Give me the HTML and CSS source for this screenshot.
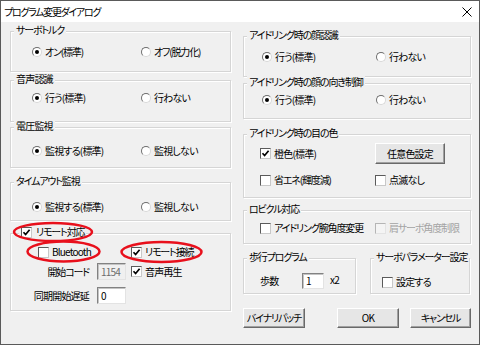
FILE: index.html
```html
<!DOCTYPE html>
<html lang="ja">
<head>
<meta charset="utf-8">
<title>プログラム変更ダイアログ</title>
<link rel="stylesheet" href="styles.css">
</head>
<body>
<div class="window">
  <div class="titlebar">
    <span class="title">プログラム変更ダイアログ</span>
    <svg class="close" width="10" height="10" viewBox="0 0 10 10"><path d="M0.5 0.5 L9.5 9.5 M9.5 0.5 L0.5 9.5" stroke="#000" stroke-width="1" fill="none"/></svg>
  </div>
  <div class="client">
    <div class="col col-left">
      <div class="group g-torque">
        <div class="gtitle kana">サーボトルク</div>
        <div class="row radios-l">
          <span class="opt kana"><i class="radio on"></i>オン(標準)</span>
          <span class="opt kana"><i class="radio"></i>オフ(脱力化)</span>
        </div>
      </div>
      <div class="group g-voice">
        <div class="gtitle">音声認識</div>
        <div class="row radios-l">
          <span class="opt"><i class="radio on"></i>行う(標準)</span>
          <span class="opt"><i class="radio"></i>行わない</span>
        </div>
      </div>
      <div class="group g-volt">
        <div class="gtitle">電圧監視</div>
        <div class="row radios-l">
          <span class="opt"><i class="radio on"></i>監視する(標準)</span>
          <span class="opt"><i class="radio"></i>監視しない</span>
        </div>
      </div>
      <div class="group g-timeout">
        <div class="gtitle kana">タイムアウト監視</div>
        <div class="row radios-l">
          <span class="opt"><i class="radio on"></i>監視する(標準)</span>
          <span class="opt"><i class="radio"></i>監視しない</span>
        </div>
      </div>
      <div class="group g-remote">
        <div class="gtitle gtitle-check kana"><i class="check on"><svg viewBox="0 0 9 9"><path d="M1.5 4.2 L3.6 6.5 L7.6 1.8" /></svg></i>リモート対応</div>
        <div class="row remote-row1">
          <span class="opt opt-bt"><i class="check"></i>Bluetooth</span>
          <span class="opt kana"><i class="check on"><svg viewBox="0 0 9 9"><path d="M1.5 4.2 L3.6 6.5 L7.6 1.8" /></svg></i>リモート接続</span>
        </div>
        <div class="row field-row field-row2">
          <span class="flabel kana">開始コード</span>
          <span class="input disabled">1154</span>
          <span class="opt opt-sound"><i class="check on"><svg viewBox="0 0 9 9"><path d="M1.5 4.2 L3.6 6.5 L7.6 1.8" /></svg></i>音声再生</span>
        </div>
        <div class="row field-row field-row3">
          <span class="flabel">同期開始遅延</span>
          <span class="input">0</span>
        </div>
      </div>
    </div>

    <div class="col col-right">
      <div class="group r-face">
        <div class="gtitle kana">アイドリング時の顔認識</div>
        <div class="row radios-r">
          <span class="opt"><i class="radio on"></i>行う(標準)</span>
          <span class="opt"><i class="radio"></i>行わない</span>
        </div>
      </div>
      <div class="group r-dir">
        <div class="gtitle kana">アイドリング時の顔の向き制御</div>
        <div class="row radios-r">
          <span class="opt"><i class="radio on"></i>行う(標準)</span>
          <span class="opt"><i class="radio"></i>行わない</span>
        </div>
      </div>
      <div class="group r-eye">
        <div class="gtitle kana">アイドリング時の目の色</div>
        <div class="row checks-r eye-row1">
          <span class="opt"><i class="check on"><svg viewBox="0 0 9 9"><path d="M1.5 4.2 L3.6 6.5 L7.6 1.8" /></svg></i>橙色(標準)</span>
          <span class="btn btn-color">任意色設定</span>
        </div>
        <div class="row checks-r eye-row2">
          <span class="opt kana"><i class="check"></i>省エネ(輝度減)</span>
          <span class="opt"><i class="check"></i>点滅なし</span>
        </div>
      </div>
      <div class="group r-robi">
        <div class="gtitle kana">ロビクル対応</div>
        <div class="row checks-r robi-row">
          <span class="opt kana"><i class="check"></i>アイドリング腕角度変更</span>
          <span class="opt kana disabled-opt"><i class="check off"></i>肩サーボ角度制限</span>
        </div>
      </div>
      <div class="pair">
        <div class="group r-walk">
          <div class="gtitle kana">歩行プログラム</div>
          <div class="row walk-row">
            <span class="wlabel">歩数</span>
            <span class="input input-steps">1</span>
            <span class="times">x2</span>
          </div>
        </div>
        <div class="group r-param">
          <div class="gtitle kana">サーボパラメーター設定</div>
          <div class="row param-row">
            <span class="opt"><i class="check"></i>設定する</span>
          </div>
        </div>
      </div>
      <div class="buttons">
        <span class="btn btn-patch kana">バイナリパッチ</span>
        <span class="btn btn-ok">OK</span>
        <span class="btn btn-cancel kana">キャンセル</span>
      </div>
    </div>
  </div>
  <svg class="marks" width="480" height="345" viewBox="0 0 480 345">
    <ellipse cx="53" cy="232" rx="39" ry="9"/>
    <ellipse cx="63.5" cy="251.5" rx="36" ry="10"/>
    <ellipse cx="161.5" cy="252" rx="40" ry="10"/>
  </svg>
</div>
</body>
</html>
```

FILE: styles.css
```css
* { box-sizing: border-box; }
html, body { margin: 0; padding: 0; }
body {
  width: 480px;
  height: 345px;
  overflow: hidden;
  background: #fff;
  font-family: "Noto Sans CJK JP", "Noto Sans", sans-serif;
  font-size: 10px;
  line-height: 12px;
  letter-spacing: -0.8px;
  color: #000;
  font-feature-settings: "palt";
}
.kana { letter-spacing: -1.15px; }
.window {
  position: relative;
  width: 480px;
  height: 345px;
  border: 1px solid #5a5a5a;
  background: #f0f0f0;
  display: flex;
  flex-direction: column;
}
.titlebar {
  height: 21px;
  flex: none;
  background: #fff;
  display: flex;
  align-items: center;
  justify-content: space-between;
  padding: 0 7px 0 3px;
}
.title { white-space: nowrap; letter-spacing: -1.3px; }
.close { display: block; }

.client {
  flex: 1;
  display: flex;
  padding: 0 8px 0 9px;
  gap: 12px;
}
.col { display: flex; flex-direction: column; }
.col-left { width: 221px; }
.col-right { width: 228px; }

.group {
  flex: none;
  border: 1px solid #d5d5d5;
  box-shadow: inset 1px 1px 0 #fff, 1px 1px 0 #fff;
  display: flex;
  flex-direction: column;
}
.gtitle {
  align-self: flex-start;
  margin: -8px 0 0 3px;
  padding: 0 2px;
  height: 12px;
  line-height: 12px;
  background: #f0f0f0;
  white-space: nowrap;
}
.gtitle-check {
  display: flex;
  align-items: center;
  gap: 4px;
  margin-left: 8px;
}

.row { display: flex; align-items: center; height: 14px; flex: none; }
.opt { display: flex; align-items: center; gap: 3px; white-space: nowrap; }

/* radios and checks */
.radio {
  position: relative;
  display: block;
  width: 10px;
  height: 10px;
  border-radius: 50%;
  border: 1px solid;
  border-color: #6e6e6e #d8d8d8 #d8d8d8 #6e6e6e;
  background: #fff;
  flex: none;
}
.radio.on::after {
  content: "";
  position: absolute;
  left: 2px;
  top: 2px;
  width: 4px;
  height: 4px;
  border-radius: 50%;
  background: #000;
}
.check {
  display: block;
  width: 11px;
  height: 11px;
  border: 1px solid;
  border-color: #5a5a5a #c8c8c8 #c8c8c8 #5a5a5a;
  background: #fff;
  flex: none;
}
.check svg { display: block; width: 9px; height: 9px; }
.check svg path { fill: none; stroke: #000; stroke-width: 1.7; }
.check.off { border-color: #b5b5b5 #e3e3e3 #e3e3e3 #b5b5b5; background: #f4f4f4; }
.disabled-opt { color: #a3a3a3; }

/* radio / check rows */
.radios-l { padding-left: 21px; }
.radios-l .opt:first-child { width: 109px; }
.radios-r { padding-left: 18px; }
.radios-r .opt:first-child { width: 114px; }
.checks-r { padding-left: 16px; }
.checks-r .opt:first-child { width: 115px; }

/* left groups */
.g-torque { margin-top: 9px; height: 41px; }
.g-torque .row { margin-top: 9px; }
.g-voice { margin-top: 8px; height: 42px; }
.g-voice .row { margin-top: 6px; }
.g-volt { margin-top: 5px; height: 41px; }
.g-volt .row { margin-top: 12px; }
.g-timeout { margin-top: 14px; height: 39px; }
.g-timeout .row { margin-top: 13px; }
.g-remote { margin-top: 12px; height: 78px; }

.remote-row1 { margin-top: 7px; padding-left: 27px; }
.opt-bt { width: 93px; }
.field-row { height: 17px; }
.field-row2 { margin-top: 4px; }
.field-row3 { margin-top: 7px; }
.flabel { width: 78px; text-align: right; margin-right: 8px; white-space: nowrap; }
.input {
  display: flex;
  align-items: center;
  width: 29px;
  height: 17px;
  padding-left: 3px;
  background: #fff;
  border: 1px solid;
  border-color: #828282 #e3e3e3 #e3e3e3 #828282;
  box-shadow: inset 1px 1px 0 #c4c4c4;
}
.input.disabled { background: #f0f0f0; color: #6d6d6d; }
.opt-sound { margin-left: 5px; }

/* right groups */
.r-face { margin-top: 14px; height: 41px; }
.r-face .row { margin-top: 9px; }
.r-dir { margin-top: 6px; height: 36px; }
.r-dir .row { margin-top: 5px; }
.r-eye { margin-top: 15px; height: 64px; }
.eye-row1 { height: 21px; margin-top: 4px; }
.eye-row2 { margin-top: 9px; }
.r-robi { margin-top: 12px; height: 34px; }
.robi-row { margin-top: 6px; }

.pair { display: flex; margin-top: 14px; gap: 14px; }
.r-walk { width: 113px; height: 36px; }
.r-param { width: 100px; height: 36px; }
.walk-row { height: 16px; margin-top: 10px; padding-left: 16px; }
.wlabel { width: 42px; }
.input-steps { width: 22px; height: 16px; }
.times { margin-left: 6px; margin-bottom: 3px; }
.param-row { margin-top: 12px; padding-left: 11px; }

/* buttons */
.btn {
  display: flex;
  align-items: center;
  justify-content: center;
  height: 20px;
  background: #e6e6e6;
  border: 1px solid;
  border-color: #fff #696969 #696969 #fff;
  box-shadow: inset -1px -1px 0 #a0a0a0;
  white-space: nowrap;
}
.btn-color { width: 70px; height: 21px; }
.buttons { display: flex; margin-top: 14px; }
.btn-patch { width: 62px; }
.btn-ok { width: 62px; margin-left: 32px; }
.btn-cancel { width: 61px; margin-left: 11px; }

/* annotation overlay */
.marks {
  position: absolute;
  left: -1px;
  top: -1px;
  pointer-events: none;
}
.marks ellipse { fill: none; stroke: #e8101c; stroke-width: 2.5; }
```
